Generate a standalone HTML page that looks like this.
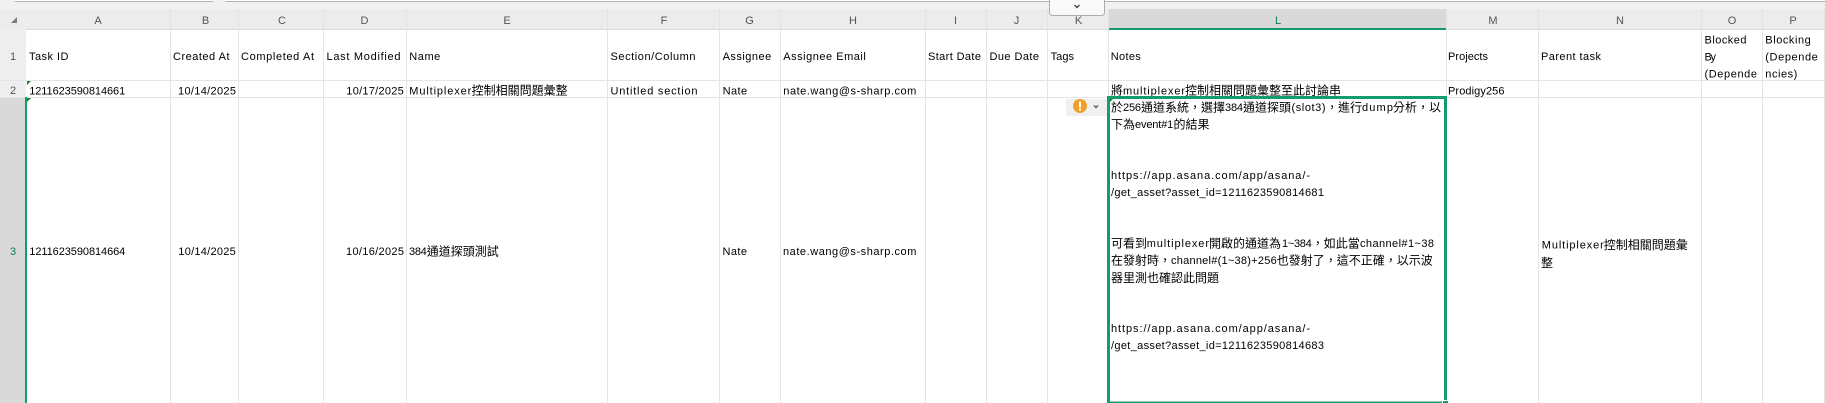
<!DOCTYPE html>
<html lang="zh-Hant">
<head>
<meta charset="utf-8">
<title>Spreadsheet</title>
<style>
html,body{margin:0;padding:0;background:#fff;width:1825px;height:403px;overflow:hidden}
svg{display:block}
text{font-family:"Liberation Sans","Noto Sans CJK TC",sans-serif;font-size:11px;fill:#000}
text.c{font-family:"Noto Sans CJK TC","Noto Sans CJK JP",sans-serif;font-size:12px;fill:#000}
text.h{font-size:11px;fill:#555;text-anchor:middle}
</style>
</head>
<body>
<svg width="1825" height="403" viewBox="0 0 1825 403" xmlns="http://www.w3.org/2000/svg">
<!-- top strip -->
<rect x="0" y="0" width="1825" height="30" fill="#f1f1f1"/>
<rect x="15" y="0" width="198" height="1" fill="#fff"/>
<rect x="225" y="0" width="1600" height="1" fill="#fff"/>
<rect x="15" y="1" width="198" height="1" fill="#b4b4b4"/>
<rect x="225" y="1" width="1600" height="1" fill="#b4b4b4"/>
<!-- column header -->
<rect x="0" y="9" width="1825" height="20" fill="#ececec"/>
<rect x="0" y="29" width="26" height="374" fill="#eeeeee"/>
<rect x="1108" y="9" width="338" height="20" fill="#d9d9d9"/>
<rect x="26" y="29" width="1799" height="1" fill="#d9d9d9"/>
<rect x="1108" y="28" width="339" height="2" fill="#149c6b"/>
<path d="M11 23 L17 17 L17 23 Z" fill="#7d7d7d"/>
<!-- cells -->
<rect x="26" y="30" width="1799" height="373" fill="#fff"/>
<!-- vertical grid -->
<g fill="#e4e4e4">
<rect x="170" y="9" width="1" height="394"/>
<rect x="238" y="9" width="1" height="394"/>
<rect x="323" y="9" width="1" height="394"/>
<rect x="406" y="9" width="1" height="394"/>
<rect x="607" y="9" width="1" height="394"/>
<rect x="719" y="9" width="1" height="394"/>
<rect x="780" y="9" width="1" height="394"/>
<rect x="925" y="9" width="1" height="394"/>
<rect x="986" y="9" width="1" height="394"/>
<rect x="1047" y="9" width="1" height="394"/>
<rect x="1108" y="9" width="1" height="394"/>
<rect x="1446" y="9" width="1" height="394"/>
<rect x="1538" y="9" width="1" height="394"/>
<rect x="1701" y="9" width="1" height="394"/>
<rect x="1762" y="9" width="1" height="394"/>
<rect x="1824" y="9" width="1" height="394"/>
<rect x="0" y="80" width="1825" height="1"/>
<rect x="0" y="97" width="1825" height="1"/>
</g>
<!-- row 3 header selection -->
<rect x="0" y="98" width="25" height="305" fill="#d9d9d9"/>
<rect x="25" y="97" width="2" height="306" fill="#149c6b"/>
<!-- collapse button -->
<rect x="1049.5" y="-6" width="55" height="21.5" rx="3" fill="#f9f9f9" stroke="#adadad"/>
<path d="M1074.5 5 L1077 7.5 L1079.5 5" fill="none" stroke="#444" stroke-width="1.4"/>
<!-- column letters -->
<text class="h" x="98" y="24">A</text>
<text class="h" x="205.5" y="24">B</text>
<text class="h" x="282" y="24">C</text>
<text class="h" x="364.5" y="24">D</text>
<text class="h" x="507" y="24">E</text>
<text class="h" x="664" y="24">F</text>
<text class="h" x="749.5" y="24">G</text>
<text class="h" x="853" y="24">H</text>
<text class="h" x="955.5" y="24">I</text>
<text class="h" x="1016.5" y="24">J</text>
<text class="h" x="1078.5" y="24">K</text>
<text class="h" x="1278" y="24" style="fill:#107c50">L</text>
<text class="h" x="1493" y="24">M</text>
<text class="h" x="1620" y="24">N</text>
<text class="h" x="1732" y="24">O</text>
<text class="h" x="1793" y="24">P</text>
<!-- row numbers -->
<text class="h" x="13" y="60">1</text>
<text class="h" x="13" y="94">2</text>
<text class="h" x="13" y="255" style="fill:#107c50">3</text>
<!-- header row -->
<text x="29" y="60" textLength="39.5">Task ID</text>
<text x="173" y="60" textLength="56.5">Created At</text>
<text x="241" y="60" textLength="73">Completed At</text>
<text x="326.5" y="60" textLength="74">Last Modified</text>
<text x="409.3" y="60" textLength="31">Name</text>
<text x="610.5" y="60" textLength="85">Section/Column</text>
<text x="722.6" y="60" textLength="48.6">Assignee</text>
<text x="783.3" y="60" textLength="82.5">Assignee Email</text>
<text x="928" y="60" textLength="53">Start Date</text>
<text x="989.5" y="60" textLength="49.5">Due Date</text>
<text x="1050.6" y="60" textLength="23.4">Tags</text>
<text x="1110.8" y="60" textLength="30">Notes</text>
<text x="1448" y="60" textLength="40">Projects</text>
<text x="1541" y="60" textLength="60">Parent task</text>
<text x="1704.5" y="43.5" textLength="42">Blocked</text>
<text x="1704.5" y="60.5" textLength="11.5">By</text>
<text x="1704.5" y="77.5" textLength="52.5">(Depende</text>
<text x="1765.3" y="43.5" textLength="45.5">Blocking</text>
<text x="1765.3" y="60.5" textLength="52.5">(Depende</text>
<text x="1765.3" y="77.5" textLength="32">ncies)</text>
<!-- row 2 -->
<text x="29.2" y="94.5" textLength="96">1211623590814661</text>
<text x="178" y="94.5" textLength="58">10/14/2025</text>
<text x="346.3" y="94.5" textLength="57.5">10/17/2025</text>
<text x="409.3" y="94.5" textLength="62">Multiplexer</text>
<text class="c" x="471.6" y="94.5">控制相關問題彙整</text>
<text x="610.5" y="94.5" textLength="87">Untitled section</text>
<text x="722.6" y="94.5" textLength="24.5">Nate</text>
<text x="783.3" y="94.5" textLength="133">nate.wang@s-sharp.com</text>
<text class="c" x="1111" y="94.5">將</text>
<text x="1123" y="94.5" textLength="62">multiplexer</text>
<text class="c" x="1185" y="94.5">控制相關問題彙整至此討論串</text>
<text x="1448" y="94.5" textLength="56.5">Prodigy256</text>
<!-- row 3 -->
<text x="29.3" y="255" textLength="96">1211623590814664</text>
<text x="178.3" y="255" textLength="57.5">10/14/2025</text>
<text x="346" y="255" textLength="58">10/16/2025</text>
<text x="409" y="255" textLength="17.8">384</text>
<text class="c" x="426.8" y="255.5">通道探頭測試</text>
<text x="722.5" y="255" textLength="24.5">Nate</text>
<text x="783" y="255" textLength="133.4">nate.wang@s-sharp.com</text>
<text x="1541.8" y="248.5" textLength="62">Multiplexer</text>
<text class="c" x="1603.7" y="249">控制相關問題彙</text>
<text class="c" x="1541" y="267">整</text>
<!-- notes cell -->
<text class="c" x="1111" y="111.5">於</text>
<text x="1123" y="111" textLength="18">256</text>
<text class="c" x="1141" y="111.5">通道系統，選擇</text>
<text x="1225" y="111" textLength="18">384</text>
<text class="c" x="1243" y="111.5">通道探頭</text>
<text x="1291.5" y="111" textLength="34">(slot3)</text>
<text class="c" x="1326" y="111.5">，進行</text>
<text x="1362" y="111" textLength="31">dump</text>
<text class="c" x="1393" y="111.5">分析，以</text>
<text class="c" x="1111" y="128.5">下為</text>
<text x="1135" y="128" textLength="38.3">event#1</text>
<text class="c" x="1173.5" y="128.5">的結果</text>
<text x="1111" y="179" textLength="199">https://app.asana.com/app/asana/-</text>
<text x="1111" y="196" textLength="213">/get_asset?asset_id=1211623590814681</text>
<text class="c" x="1111" y="247.5">可看到</text>
<text x="1146.7" y="247" textLength="62.3">multiplexer</text>
<text class="c" x="1209" y="247.5">開啟的通道為</text>
<text x="1282" y="247" textLength="29.7">1~384</text>
<text class="c" x="1311.7" y="247.5">，如此當</text>
<text x="1360" y="247" textLength="74">channel#1~38</text>
<text class="c" x="1111" y="264.5">在發射時，</text>
<text x="1171" y="264" textLength="105.7">channel#(1~38)+256</text>
<text class="c" x="1276.7" y="264.5">也發射了，這不正確，以示波</text>
<text class="c" x="1111" y="282">器里測也確認此問題</text>
<text x="1111" y="332" textLength="199">https://app.asana.com/app/asana/-</text>
<text x="1111" y="349" textLength="213">/get_asset?asset_id=1211623590814683</text>
<!-- selection border -->
<rect x="1107" y="96" width="3" height="307" fill="#149c6b"/>
<rect x="1107" y="96" width="340" height="3" fill="#149c6b"/>
<rect x="1444" y="96" width="3" height="304" fill="#149c6b"/>
<rect x="1107" y="401.5" width="335" height="1.5" fill="#149c6b"/>
<rect x="1443" y="401" width="5" height="2" fill="#149c6b"/>
<!-- warning smart tag -->
<rect x="1066" y="99" width="41" height="17" fill="#f0f0f0"/>
<circle cx="1080" cy="106" r="7" fill="#f0a02a"/>
<rect x="1079" y="101.5" width="2" height="6" fill="#fff"/>
<rect x="1079" y="108.5" width="2" height="2" fill="#fff"/>
<path d="M1094 105.5 L1096 107.5 L1098 105.5" fill="none" stroke="#555" stroke-width="1.3"/>
<!-- green error triangles -->
<path d="M27 81 L31 81 L27 85 Z" fill="#1a7f37"/>
<path d="M27 98 L31 98 L27 102 Z" fill="#1a7f37"/>
<path d="M1110 99 L1113 99 L1110 102 Z" fill="#1a7f37"/>
</svg>
</body>
</html>
